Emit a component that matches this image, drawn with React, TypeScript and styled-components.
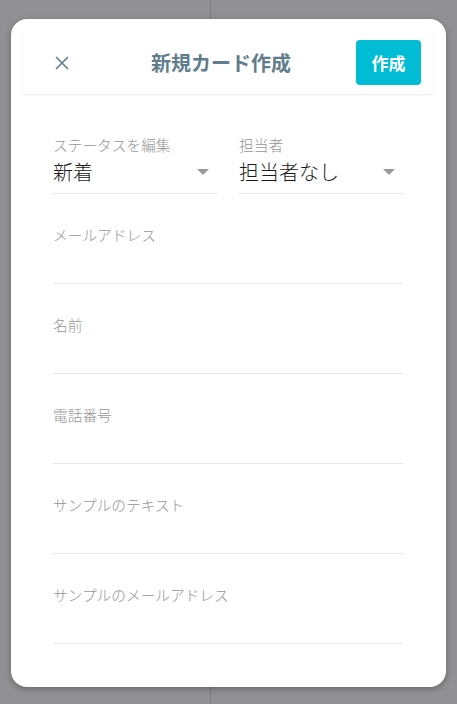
import React from 'react'
import styled, { createGlobalStyle } from 'styled-components'

const GlobalStyle = createGlobalStyle`
  html, body {
    margin: 0;
    padding: 0;
  }
  body {
    font-family: "Noto Sans CJK JP", "Noto Sans", sans-serif;
    background: #919193;
  }
`

const Backdrop = styled.div`
  box-sizing: border-box;
  width: 457px;
  height: 704px;
  padding: 19px 11px 17px;
  background: linear-gradient(to right, #919193 210px, #7d7d7f 210px, #7d7d7f 211px, #919193 211px);
`

const Modal = styled.div`
  box-sizing: border-box;
  width: 435px;
  height: 668px;
  padding: 12px 13px 0 12px;
  background: #fff;
  border-radius: 16px;
  box-shadow: 0 2px 6px rgba(0, 0, 0, 0.3);
`

const Header = styled.div`
  display: flex;
  align-items: center;
  height: 63px;
  padding: 0 12px 0 15px;
  box-shadow: 0 1px 2px rgba(0, 0, 0, 0.08);
`

const CloseButton = styled.button`
  display: flex;
  align-items: center;
  justify-content: center;
  width: 48px;
  height: 48px;
  padding: 0;
  border: none;
  background: none;
  color: #607d8b;
`

const Title = styled.h1`
  flex: 1;
  margin: 0;
  text-align: center;
  font-size: 20px;
  font-weight: 700;
  color: #607d8b;
  line-height: 28px;
`

const CreateButton = styled.button`
  width: 65px;
  height: 45px;
  border: none;
  border-radius: 4px;
  background: #00bcd4;
  color: #fff;
  font-family: inherit;
  font-size: 17px;
  font-weight: 700;
`

const Body = styled.div`
  padding: 10px 30px 0 30px;
`

const SelectRow = styled.div`
  display: grid;
  grid-template-columns: 1fr 1fr;
  column-gap: 22px;
`

const Field = styled.div`
  padding-top: 31px;
  border-bottom: 1px solid #e6e6e6;
`

const Label = styled.div`
  font-size: 14.7px;
  font-weight: 300;
  line-height: 20px;
  color: #959595;
`

const InputArea = styled.div`
  height: 38px;
`

const SelectValue = styled.div`
  display: flex;
  align-items: center;
  justify-content: space-between;
  height: 32px;
  padding: 0 8px 6px 0;
  font-size: 20px;
  font-weight: 300;
  color: #1a1a1a;
`

const Caret = styled.span`
  width: 0;
  height: 0;
  margin-top: 2px;
  border-left: 6px solid transparent;
  border-right: 6px solid transparent;
  border-top: 6px solid #9a9a9a;
`

const selects = [
  { label: 'ステータスを編集', value: '新着' },
  { label: '担当者', value: '担当者なし' },
]

const textFields = ['メールアドレス', '名前', '電話番号', 'サンプルのテキスト', 'サンプルのメールアドレス']

export default function App() {
  return (
    <>
      <GlobalStyle />
      <Backdrop>
        <Modal>
          <Header>
            <CloseButton aria-label="close">
              <svg width="14" height="14" viewBox="0 0 14 14">
                <path d="M1 1L13 13M13 1L1 13" stroke="currentColor" strokeWidth="1.6" />
              </svg>
            </CloseButton>
            <Title>新規カード作成</Title>
            <CreateButton>作成</CreateButton>
          </Header>
          <Body>
            <SelectRow>
              {selects.map((s) => (
                <Field key={s.label}>
                  <Label>{s.label}</Label>
                  <SelectValue>
                    <span>{s.value}</span>
                    <Caret />
                  </SelectValue>
                </Field>
              ))}
            </SelectRow>
            {textFields.map((label) => (
              <Field key={label}>
                <Label>{label}</Label>
                <InputArea />
              </Field>
            ))}
          </Body>
        </Modal>
      </Backdrop>
    </>
  )
}
